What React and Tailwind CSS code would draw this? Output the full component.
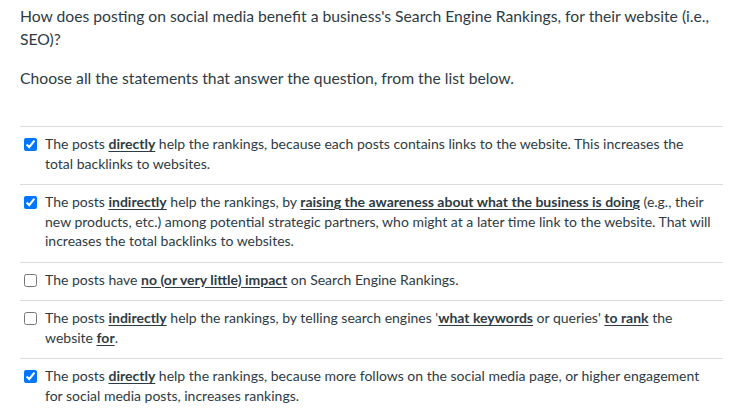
import React from "react";

const U = ({ children }) => (
  <strong className="font-bold underline underline-offset-2">{children}</strong>
);

const options = [
  {
    checked: true,
    content: (
      <>
        The posts <U>directly</U> help the rankings, because each posts contains links to the website. This increases the total backlinks to websites.
      </>
    ),
  },
  {
    checked: true,
    content: (
      <>
        The posts <U>indirectly</U> help the rankings, by <U>raising the awareness about what the business is doing</U> (e.g., their new products, etc.) among potential strategic partners, who might at a later time link to the website. That will increases the total backlinks to websites.
      </>
    ),
  },
  {
    checked: false,
    content: (
      <>
        The posts have <U>no (or very little) impact</U> on Search Engine Rankings.
      </>
    ),
  },
  {
    checked: false,
    content: (
      <>
        The posts <U>indirectly</U> help the rankings, by telling search engines '<U>what keywords</U> or queries' <U>to rank</U> the website <U>for</U>.
      </>
    ),
  },
  {
    checked: true,
    content: (
      <>
        The posts <U>directly</U> help the rankings, because more follows on the social media page, or higher engagement for social media posts, increases rankings.
      </>
    ),
  },
];

export default function App() {
  return (
    <div
      className="w-[730px] h-[411px] overflow-hidden bg-white text-[#2d3b45]"
      style={{ fontFamily: "Lato, 'Open Sans', sans-serif" }}
    >
      <div className="pl-[20px] pr-[7px] pt-[5px]">
        <p className="text-[15.7px] leading-[23px]">
          How does posting on social media benefit a business's Search Engine Rankings, for their website (i.e., SEO)?
        </p>
        <p className="text-[15.7px] leading-[23px] mt-[16px]">
          Choose all the statements that answer the question, from the list below.
        </p>
        <div className="mt-[36px]">
          {options.map((o, i) => (
            <div
              key={i}
              className="flex items-start border-t border-[#dcdcdc] pt-[7px] pb-[11px]"
            >
              <div className="w-[25px] shrink-0 flex pt-[4px] pl-[4px]">
                <input
                  type="checkbox"
                  defaultChecked={o.checked}
                  className="w-[13px] h-[13px] m-0"
                />
              </div>
              <div className="w-[668px] text-[14px] leading-[19.5px]">{o.content}</div>
            </div>
          ))}
        </div>
      </div>
    </div>
  );
}
